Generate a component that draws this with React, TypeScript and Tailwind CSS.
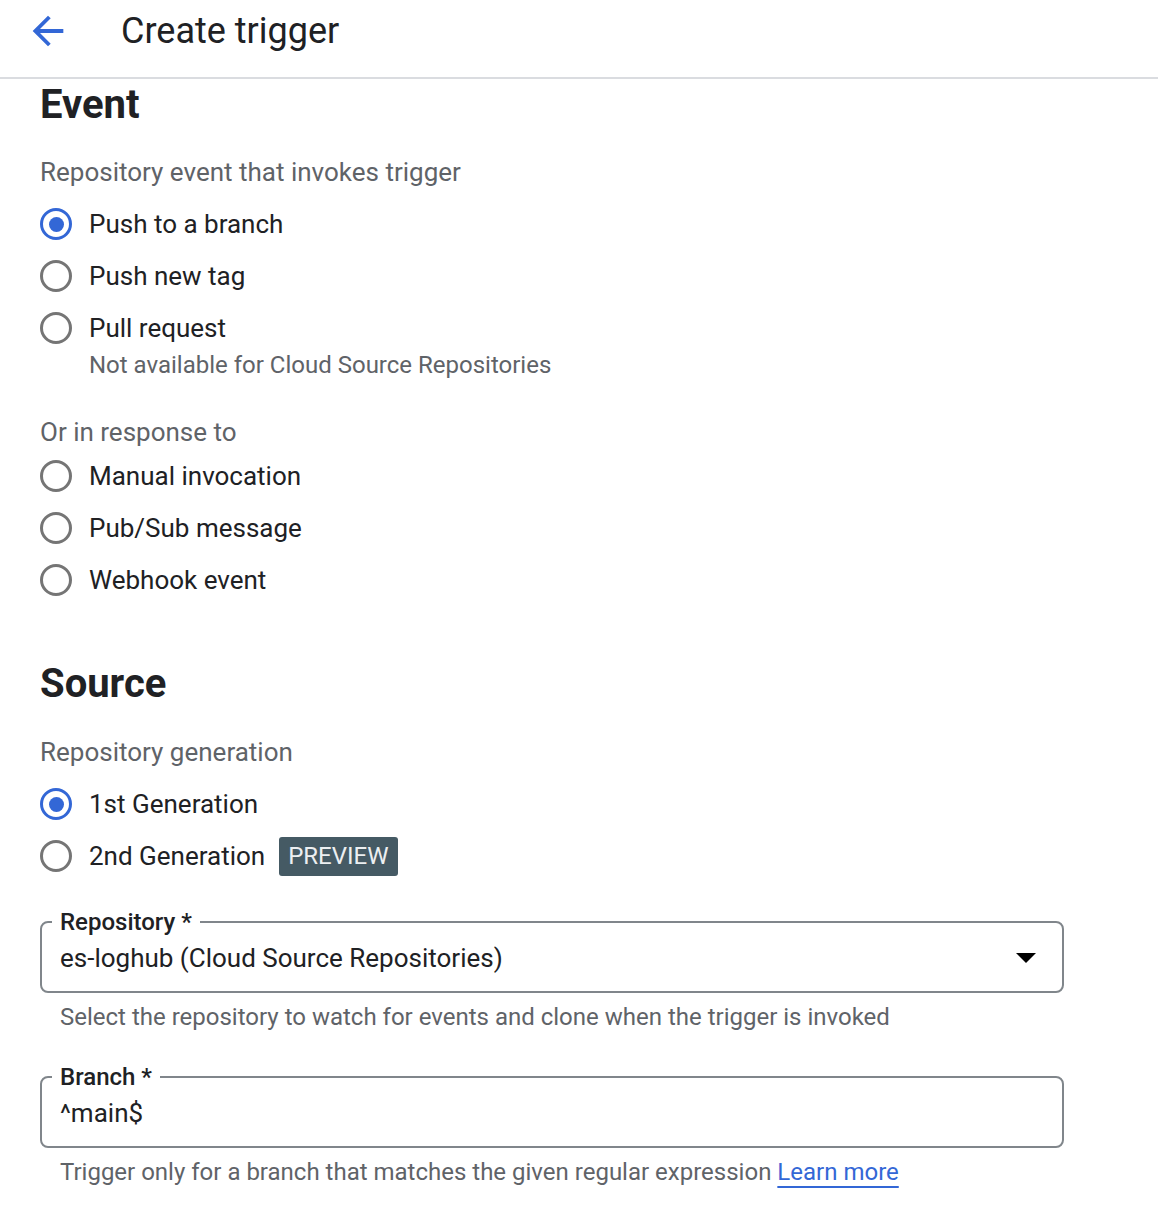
import React from "react";

const font = { fontFamily: "Roboto, 'Noto Sans', sans-serif" };

interface IRadioProps {
  label: string;
  checked?: boolean;
  children?: React.ReactNode;
}

function Radio({ label, checked, children }: IRadioProps): JSX.Element {
  return (
    <div className="flex h-[52px] items-center">
      <span
        className={
          checked
            ? "flex h-[32px] w-[32px] items-center justify-center rounded-full border-[3px] border-[#3367d6]"
            : "flex h-[32px] w-[32px] items-center justify-center rounded-full border-[3px] border-[#757575]"
        }
      >
        {checked && <span className="h-[15px] w-[15px] rounded-full bg-[#3367d6]" />}
      </span>
      <span className="ml-[17px] text-[26px] leading-[32px] text-[#202124]">{label}</span>
      {children}
    </div>
  );
}

interface IFieldProps {
  label: string;
  value: string;
  select?: boolean;
}

function Field({ label, value, select }: IFieldProps): JSX.Element {
  return (
    <fieldset className="rounded-[8px] border-2 border-[#80868b] pb-[17px] pl-[18px] pr-[26px]">
      <legend className="ml-[-8px] px-[8px] text-[24px] font-medium leading-[28px] text-[#202124]">
        {label}
      </legend>
      <div className="flex items-center justify-between pt-[6px]">
        <span className="text-[26px] leading-[32px] text-[#202124]">{value}</span>
        {select && (
          <svg width="20" height="10" viewBox="0 0 20 10">
            <polygon points="0,0 20,0 10,10" fill="#000" />
          </svg>
        )}
      </div>
    </fieldset>
  );
}

export default function App(): JSX.Element {
  return (
    <div className="min-h-[1214px] bg-white" style={font}>
      <header className="flex h-[79px] items-start border-b-2 border-[#dadce0] pt-[8px]">
        <svg className="ml-[25px]" width="46" height="46" viewBox="0 0 24 24" fill="#3367d6">
          <path d="M20 11H7.83l5.59-5.59L12 4l-8 8 8 8 1.41-1.41L7.83 13H20v-2z" />
        </svg>
        <h1 className="ml-[50px] text-[36px] leading-[46px] text-[#202124]">Create trigger</h1>
      </header>

      <main className="px-[40px]">
        <h2 className="mt-[4px] text-[40px] font-bold leading-[44px] text-[#202124]">Event</h2>
        <p className="mt-[30px] text-[26px] leading-[30px] text-[#5f6368]">
          Repository event that invokes trigger
        </p>
        <div className="mt-[11px]">
          <Radio label="Push to a branch" checked />
          <Radio label="Push new tag" />
          <Radio label="Pull request" />
          <p className="-mt-[3px] pl-[49px] text-[24px] leading-[28px] text-[#5f6368]">
            Not available for Cloud Source Repositories
          </p>
        </div>

        <p className="mt-[38px] text-[26px] leading-[30px] text-[#5f6368]">Or in response to</p>
        <div className="mt-[3px]">
          <Radio label="Manual invocation" />
          <Radio label="Pub/Sub message" />
          <Radio label="Webhook event" />
        </div>

        <h2 className="mt-[56px] text-[40px] font-bold leading-[44px] text-[#202124]">Source</h2>
        <p className="mt-[31px] text-[26px] leading-[30px] text-[#5f6368]">Repository generation</p>
        <div className="mt-[11px]">
          <Radio label="1st Generation" checked />
          <Radio label="2nd Generation">
            <span className="ml-[14px] rounded-[3px] bg-[#455a64] px-[9px] text-[24px] leading-[39px] text-[#eceff1]">
              PREVIEW
            </span>
          </Radio>
        </div>

        <div className="mt-[26px] w-[1024px]">
          <Field label="Repository *" value="es-loghub (Cloud Source Repositories)" select />
          <p className="mt-[10px] pl-[20px] text-[24px] leading-[28px] text-[#5f6368]">
            Select the repository to watch for events and clone when the trigger is invoked
          </p>
          <div className="mt-[32px]">
            <Field label="Branch *" value="^main$" />
          </div>
          <p className="mt-[10px] pl-[20px] text-[24px] leading-[28px] text-[#5f6368]">
            Trigger only for a branch that matches the given regular expression{" "}
            <a className="text-[#3367d6] underline decoration-2 underline-offset-[6px]">Learn more</a>
          </p>
        </div>
      </main>
    </div>
  );
}
